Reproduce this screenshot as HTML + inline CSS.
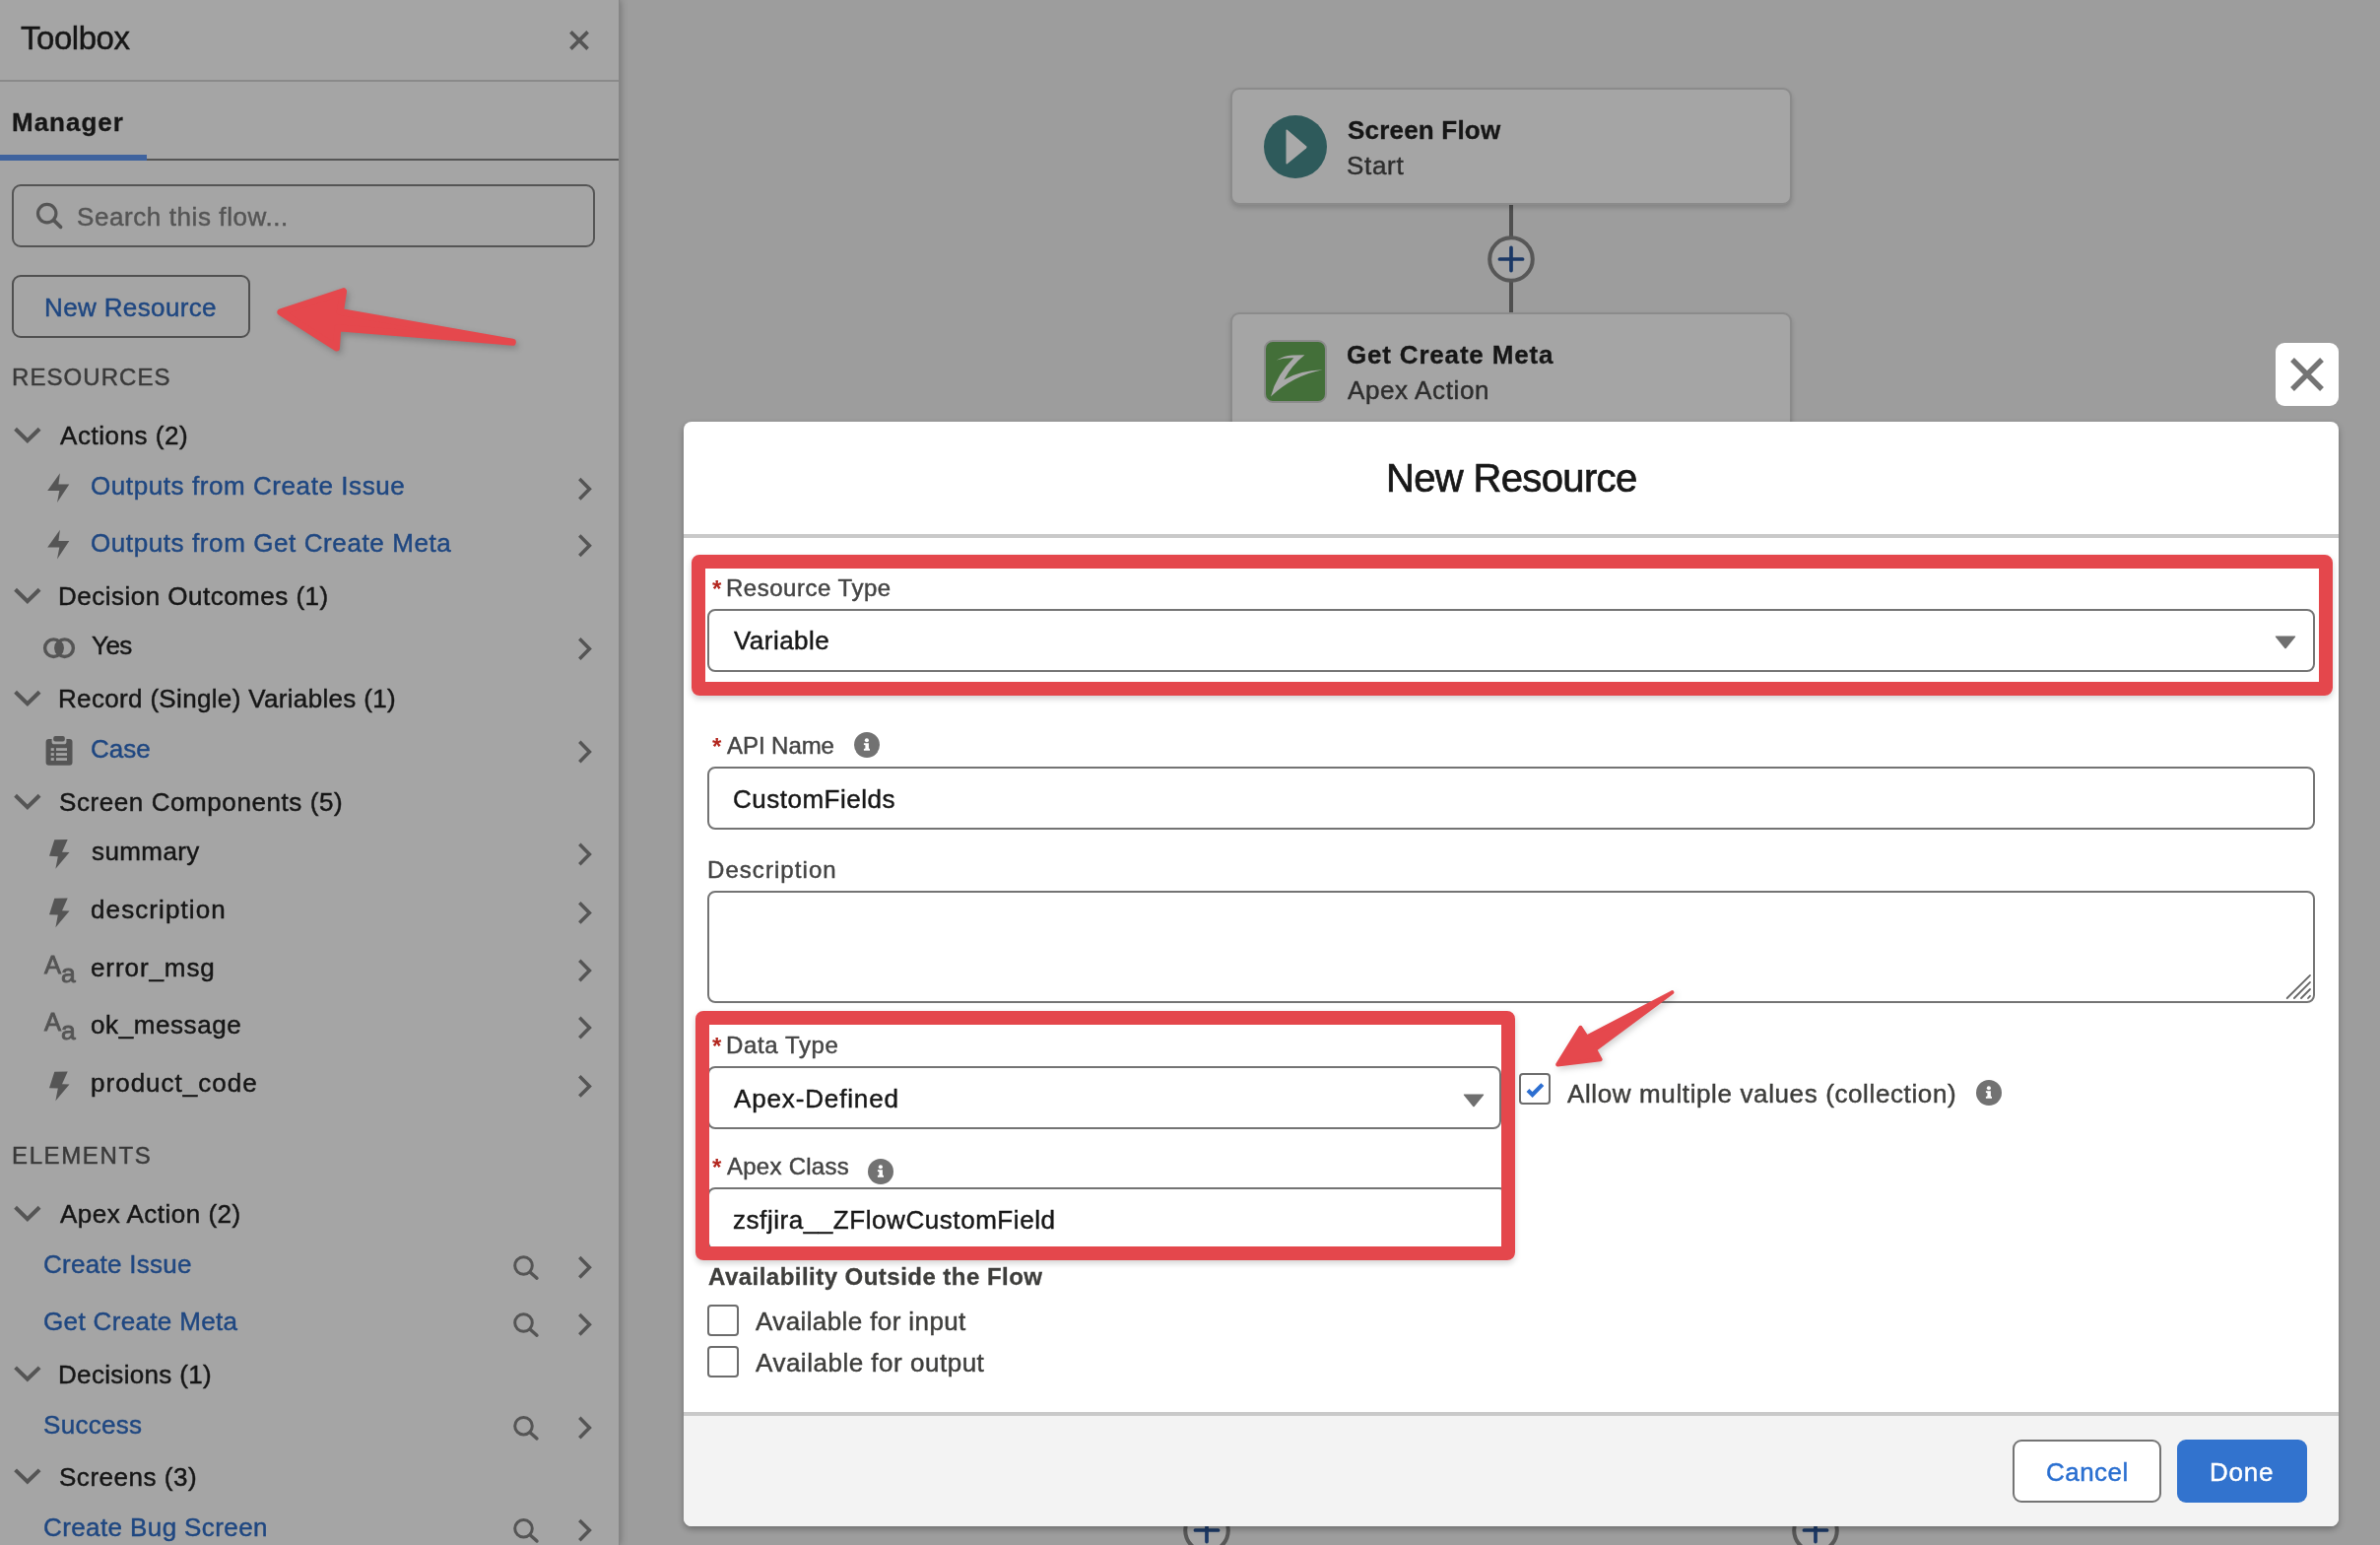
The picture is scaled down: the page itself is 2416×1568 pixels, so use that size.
<!DOCTYPE html>
<html lang="en">
<head>
<meta charset="utf-8">
<title>Flow Builder - New Resource</title>
<style>
html,body{margin:0;padding:0;}
body{width:2416px;height:1568px;overflow:hidden;position:relative;background:#9d9d9d;font-family:"Liberation Sans",sans-serif;}
.a{position:absolute;box-sizing:border-box;}
.t{position:absolute;white-space:nowrap;line-height:1;margin:0;padding:0;-webkit-text-stroke:0.45px currentColor;will-change:transform;}
svg{position:absolute;overflow:visible;}
.inp{position:absolute;box-sizing:border-box;border:2px solid #747474;border-radius:8px;background:#fff;}
.cb{position:absolute;box-sizing:border-box;border:2px solid #6c6c6c;border-radius:4px;background:#fff;width:32px;height:32px;}
.card{position:absolute;box-sizing:border-box;background:#a5a5a5;border:2px solid #8b8b8b;border-radius:9px;box-shadow:0 3px 5px rgba(0,0,0,0.16);}
.ast{position:absolute;color:#b3261e;font-size:24px;line-height:1;font-weight:700;will-change:transform;}
</style>
</head>
<body>

<!-- ================= CANVAS ================= -->
<div id="canvas" class="a" style="left:0;top:0;width:2416px;height:1568px;">
  <!-- connector lines -->
  <div class="a" style="left:1532px;top:207px;width:4px;height:112px;background:#4f4f4f;"></div>
  <!-- start card -->
  <div class="card" style="left:1249px;top:89px;width:570px;height:119px;"></div>
  <svg style="left:1283px;top:117px;" width="64" height="64" viewBox="0 0 64 64">
    <circle cx="32" cy="32" r="32" fill="#2e5a5b"/>
    <path d="M22.5 15.5 L22.5 48.5 Q22.5 50 23.8 49.2 L43 33.5 Q44.2 32.3 43 31.2 L23.8 14.8 Q22.5 14 22.5 15.5 Z" fill="#a9a9a9"/>
  </svg>
  <!-- plus connector -->
  <svg style="left:1510px;top:239px;" width="48" height="48" viewBox="0 0 48 48">
    <circle cx="24" cy="24" r="21.8" fill="#a5a5a5" stroke="#575757" stroke-width="4"/>
    <path d="M12.4 24 H35.6 M24 12.4 V35.6" stroke="#1b3865" stroke-width="3.7" stroke-linecap="round" fill="none"/>
  </svg>
  <!-- get create meta card -->
  <div class="card" style="left:1249px;top:317px;width:570px;height:140px;"></div>
  <svg style="left:1283px;top:345px;" width="64" height="64" viewBox="0 0 64 64">
    <rect x="1" y="1" width="62" height="62" rx="8" ry="8" fill="#436f39" stroke="#8b8b8b" stroke-width="2"/>
    <path d="M12.8 20.6 Q20 16 28.8 15.4 L41.4 15.3 Q28 26 20.4 40.5 Q36 31 59.7 30.3 Q30 36 7 57.4 Q13 35 30.3 18.3 Q20 18 12.8 20.6 Z" fill="#a9a9a9"/>
  </svg>
  <!-- bottom plus connectors (mostly hidden under modal) -->
  <svg style="left:1201px;top:1529px;" width="48" height="48" viewBox="0 0 48 48">
    <circle cx="24" cy="24" r="21.8" fill="#a5a5a5" stroke="#575757" stroke-width="4"/>
    <path d="M12.4 24 H35.6 M24 12.4 V35.6" stroke="#1b3865" stroke-width="3.7" stroke-linecap="round" fill="none"/>
  </svg>
  <svg style="left:1819px;top:1529px;" width="48" height="48" viewBox="0 0 48 48">
    <circle cx="24" cy="24" r="21.8" fill="#a5a5a5" stroke="#575757" stroke-width="4"/>
    <path d="M12.4 24 H35.6 M24 12.4 V35.6" stroke="#1b3865" stroke-width="3.7" stroke-linecap="round" fill="none"/>
  </svg>
</div>

<!-- ================= SIDEBAR ================= -->
<div id="sidebar" class="a" style="left:0;top:0;width:628px;height:1568px;background:#a5a5a5;box-shadow:1px 0 0 #868686, 2px 0 7px rgba(0,0,0,0.28);"></div>
<div class="a" style="left:0;top:81px;width:628px;height:2px;background:#8a8a8a;"></div>
<div class="a" style="left:0;top:161px;width:628px;height:2px;background:#555555;"></div>
<div class="a" style="left:0;top:157px;width:149px;height:6px;background:#3f639e;"></div>
<!-- toolbox close X -->
<svg style="left:578px;top:31px;" width="20" height="20" viewBox="0 0 20 20"><path d="M1.4 1.4 L18.6 18.6 M18.6 1.4 L1.4 18.6" stroke="#555" stroke-width="3.7" fill="none"/></svg>
<!-- search box -->
<div class="a" style="left:12px;top:187px;width:592px;height:64px;border:2px solid #555;border-radius:9px;"></div>
<svg style="left:36px;top:205px;" width="28" height="28" viewBox="0 0 28 28"><circle cx="11.7" cy="11.6" r="9.2" stroke="#555" stroke-width="3.2" fill="none"/><path d="M18.4 18.4 L25.6 25.4" stroke="#555" stroke-width="3.6" stroke-linecap="round"/></svg>
<!-- new resource button -->
<div class="a" style="left:12px;top:279px;width:242px;height:64px;border:2px solid #505050;border-radius:9px;"></div>
<!-- red arrow 1 -->
<svg style="left:0;top:0;filter:drop-shadow(2px 3px 3px rgba(0,0,0,0.22));" width="640" height="400" viewBox="0 0 640 400">
  <path d="M284.9 316.7 L348.6 295.7 L345.4 316.4 L520.3 347.3 L342.8 332.8 L341.5 352.9 Z" fill="#e5484d" stroke="#e5484d" stroke-width="7" stroke-linejoin="round"/>
</svg>

<svg style="left:0;top:0" width="60" height="1568"><path d="M15.6 435.3 L27.85 447.2 L40.1 435.3" stroke="#555555" stroke-width="4" fill="none" stroke-linejoin="miter"/></svg>
<svg style="left:0;top:0" width="60" height="1568"><path d="M15.6 598.3 L27.85 610.2 L40.1 598.3" stroke="#555555" stroke-width="4" fill="none" stroke-linejoin="miter"/></svg>
<svg style="left:0;top:0" width="60" height="1568"><path d="M15.6 702.3 L27.85 714.2 L40.1 702.3" stroke="#555555" stroke-width="4" fill="none" stroke-linejoin="miter"/></svg>
<svg style="left:0;top:0" width="60" height="1568"><path d="M15.6 807.3 L27.85 819.2 L40.1 807.3" stroke="#555555" stroke-width="4" fill="none" stroke-linejoin="miter"/></svg>
<svg style="left:0;top:0" width="60" height="1568"><path d="M15.6 1225.3 L27.85 1237.2 L40.1 1225.3" stroke="#555555" stroke-width="4" fill="none" stroke-linejoin="miter"/></svg>
<svg style="left:0;top:0" width="60" height="1568"><path d="M15.6 1387.9 L27.85 1399.8 L40.1 1387.9" stroke="#555555" stroke-width="4" fill="none" stroke-linejoin="miter"/></svg>
<svg style="left:0;top:0" width="60" height="1568"><path d="M15.6 1491.9 L27.85 1503.8 L40.1 1491.9" stroke="#555555" stroke-width="4" fill="none" stroke-linejoin="miter"/></svg>
<svg style="left:0;top:0" width="628" height="1568"><path d="M588.3 486.0 L598.4 496.2 L588.3 506.4" stroke="#555555" stroke-width="3.5" fill="none" stroke-linejoin="miter"/></svg>
<svg style="left:0;top:0" width="100" height="1568"><polygon points="60.9,480.3 48.2,497.9 60.3,497.9 58.0,509.9 70.3,491.6 59.4,491.6" fill="#555555"/></svg>
<svg style="left:0;top:0" width="628" height="1568"><path d="M588.3 543.5 L598.4 553.7 L588.3 563.9" stroke="#555555" stroke-width="3.5" fill="none" stroke-linejoin="miter"/></svg>
<svg style="left:0;top:0" width="100" height="1568"><polygon points="60.9,537.8 48.2,555.4 60.3,555.4 58.0,567.4 70.3,549.1 59.4,549.1" fill="#555555"/></svg>
<svg style="left:0;top:0" width="628" height="1568"><path d="M588.3 648.3 L598.4 658.5 L588.3 668.7" stroke="#555555" stroke-width="3.5" fill="none" stroke-linejoin="miter"/></svg>
<svg style="left:0;top:0" width="100" height="1568"><circle cx="54.4" cy="657.7" r="8.8" stroke="#555555" stroke-width="3.4" fill="none"/><circle cx="65.6" cy="657.7" r="8.8" stroke="#555555" stroke-width="3.4" fill="none"/><path d="M60 650.1 A8.8 8.8 0 0 1 60 665.3 A8.8 8.8 0 0 1 60 650.1 Z" fill="#555555"/></svg>
<svg style="left:0;top:0" width="628" height="1568"><path d="M588.3 752.8 L598.4 763.0 L588.3 773.2" stroke="#555555" stroke-width="3.5" fill="none" stroke-linejoin="miter"/></svg>
<svg style="left:0;top:0" width="100" height="1568"><rect x="46.6" y="750.0" width="26.9" height="26.8" rx="3" fill="#555555"/><rect x="52.6" y="746.7" width="14.8" height="8.6" rx="2.6" fill="#a5a5a5"/><rect x="54.2" y="747.0" width="11.6" height="5.4" rx="2" fill="#555555"/><rect x="51.7" y="759.2" width="3.1" height="2.7" fill="#a5a5a5"/><rect x="57" y="759.2" width="11" height="2.7" fill="#a5a5a5"/><rect x="51.7" y="764.2" width="3.1" height="2.7" fill="#a5a5a5"/><rect x="57" y="764.2" width="11" height="2.7" fill="#a5a5a5"/><rect x="51.7" y="769.2" width="3.1" height="2.7" fill="#a5a5a5"/><rect x="57" y="769.2" width="11" height="2.7" fill="#a5a5a5"/></svg>
<svg style="left:0;top:0" width="628" height="1568"><path d="M588.3 856.8 L598.4 867.0 L588.3 877.2" stroke="#555555" stroke-width="3.5" fill="none" stroke-linejoin="miter"/></svg>
<svg style="left:0;top:0" width="100" height="1568"><polygon points="55.3,852.3 68.7,852.1 63.0,864.8 70.5,865.1 56.4,881.8 58.8,869.2 50.0,868.8" fill="#555555"/></svg>
<svg style="left:0;top:0" width="628" height="1568"><path d="M588.3 916.2 L598.4 926.4 L588.3 936.6" stroke="#555555" stroke-width="3.5" fill="none" stroke-linejoin="miter"/></svg>
<svg style="left:0;top:0" width="100" height="1568"><polygon points="55.3,911.7 68.7,911.5 63.0,924.2 70.5,924.5 56.4,941.2 58.8,928.6 50.0,928.2" fill="#555555"/></svg>
<svg style="left:0;top:0" width="628" height="1568"><path d="M588.3 974.8 L598.4 985.0 L588.3 995.2" stroke="#555555" stroke-width="3.5" fill="none" stroke-linejoin="miter"/></svg>
<div class="t" style="left:44.8px;top:966.8px;font-size:25.5px;color:#555555;-webkit-text-stroke:0.9px #555555">A</div><div class="t" style="left:61.6px;top:974.9px;font-size:26.5px;color:#555555;-webkit-text-stroke:0.9px #555555">a</div>
<svg style="left:0;top:0" width="628" height="1568"><path d="M588.3 1032.8 L598.4 1043.0 L588.3 1053.2" stroke="#555555" stroke-width="3.5" fill="none" stroke-linejoin="miter"/></svg>
<div class="t" style="left:44.8px;top:1024.8px;font-size:25.5px;color:#555555;-webkit-text-stroke:0.9px #555555">A</div><div class="t" style="left:61.6px;top:1032.9px;font-size:26.5px;color:#555555;-webkit-text-stroke:0.9px #555555">a</div>
<svg style="left:0;top:0" width="628" height="1568"><path d="M588.3 1092.2 L598.4 1102.4 L588.3 1112.6" stroke="#555555" stroke-width="3.5" fill="none" stroke-linejoin="miter"/></svg>
<svg style="left:0;top:0" width="100" height="1568"><polygon points="55.3,1087.7 68.7,1087.5 63.0,1100.2 70.5,1100.5 56.4,1117.2 58.8,1104.6 50.0,1104.2" fill="#555555"/></svg>
<svg style="left:0;top:0" width="628" height="1568"><path d="M588.3 1276.1 L598.4 1286.3 L588.3 1296.5" stroke="#555555" stroke-width="3.5" fill="none" stroke-linejoin="miter"/></svg>
<svg style="left:0;top:0" width="628" height="1568"><circle cx="531.5" cy="1284.5" r="8.8" stroke="#555555" stroke-width="3" fill="none"/><path d="M538 1291.0 L545 1297.2" stroke="#555555" stroke-width="3.4" stroke-linecap="round"/></svg>
<svg style="left:0;top:0" width="628" height="1568"><path d="M588.3 1334.1 L598.4 1344.3 L588.3 1354.5" stroke="#555555" stroke-width="3.5" fill="none" stroke-linejoin="miter"/></svg>
<svg style="left:0;top:0" width="628" height="1568"><circle cx="531.5" cy="1342.5" r="8.8" stroke="#555555" stroke-width="3" fill="none"/><path d="M538 1349.0 L545 1355.2" stroke="#555555" stroke-width="3.4" stroke-linecap="round"/></svg>
<svg style="left:0;top:0" width="628" height="1568"><path d="M588.3 1438.8 L598.4 1449.0 L588.3 1459.2" stroke="#555555" stroke-width="3.5" fill="none" stroke-linejoin="miter"/></svg>
<svg style="left:0;top:0" width="628" height="1568"><circle cx="531.5" cy="1447.2" r="8.8" stroke="#555555" stroke-width="3" fill="none"/><path d="M538 1453.7 L545 1459.9" stroke="#555555" stroke-width="3.4" stroke-linecap="round"/></svg>
<svg style="left:0;top:0" width="628" height="1568"><path d="M588.3 1542.9 L598.4 1553.1 L588.3 1563.3" stroke="#555555" stroke-width="3.5" fill="none" stroke-linejoin="miter"/></svg>
<svg style="left:0;top:0" width="628" height="1568"><circle cx="531.5" cy="1551.3" r="8.8" stroke="#555555" stroke-width="3" fill="none"/><path d="M538 1557.8 L545 1564.0" stroke="#555555" stroke-width="3.4" stroke-linecap="round"/></svg>

<div class="t" style="left:21.00px;top:21.77px;font-size:33px;font-weight:400;color:#161616;letter-spacing:-0.457px">Toolbox</div>
<div class="t" style="left:12.40px;top:110.99px;font-size:26px;font-weight:700;color:#161616;letter-spacing:1.000px;-webkit-text-stroke:0.3px">Manager</div>
<div class="t" style="left:78.30px;top:206.99px;font-size:26px;font-weight:400;color:#555555;letter-spacing:0.587px">Search this flow...</div>
<div class="t" style="left:45.30px;top:298.89px;font-size:26px;font-weight:400;color:#1f4781;letter-spacing:0.368px">New Resource</div>
<div class="t" style="left:12.00px;top:370.68px;font-size:24px;font-weight:400;color:#3a3a3a;letter-spacing:1.060px">RESOURCES</div>
<div class="t" style="left:61.00px;top:428.99px;font-size:26px;font-weight:400;color:#161616;letter-spacing:0.540px">Actions (2)</div>
<div class="t" style="left:91.70px;top:480.19px;font-size:26px;font-weight:400;color:#1f4781;letter-spacing:0.577px">Outputs from Create Issue</div>
<div class="t" style="left:91.70px;top:537.69px;font-size:26px;font-weight:400;color:#1f4781;letter-spacing:0.595px">Outputs from Get Create Meta</div>
<div class="t" style="left:59.00px;top:591.99px;font-size:26px;font-weight:400;color:#161616;letter-spacing:0.487px">Decision Outcomes (1)</div>
<div class="t" style="left:92.70px;top:642.49px;font-size:26px;font-weight:400;color:#161616;letter-spacing:-0.558px">Yes</div>
<div class="t" style="left:59.00px;top:695.99px;font-size:26px;font-weight:400;color:#161616;letter-spacing:0.334px">Record (Single) Variables (1)</div>
<div class="t" style="left:91.70px;top:746.99px;font-size:26px;font-weight:400;color:#1f4781;letter-spacing:0.021px">Case</div>
<div class="t" style="left:60.00px;top:800.99px;font-size:26px;font-weight:400;color:#161616;letter-spacing:0.582px">Screen Components (5)</div>
<div class="t" style="left:92.70px;top:850.99px;font-size:26px;font-weight:400;color:#161616;letter-spacing:0.401px">summary</div>
<div class="t" style="left:91.70px;top:910.39px;font-size:26px;font-weight:400;color:#161616;letter-spacing:1.103px">description</div>
<div class="t" style="left:91.70px;top:968.99px;font-size:26px;font-weight:400;color:#161616;letter-spacing:0.911px">error_msg</div>
<div class="t" style="left:91.70px;top:1026.99px;font-size:26px;font-weight:400;color:#161616;letter-spacing:0.594px">ok_message</div>
<div class="t" style="left:91.70px;top:1086.39px;font-size:26px;font-weight:400;color:#161616;letter-spacing:1.018px">product_code</div>
<div class="t" style="left:12.00px;top:1160.68px;font-size:24px;font-weight:400;color:#3a3a3a;letter-spacing:1.621px">ELEMENTS</div>
<div class="t" style="left:61.00px;top:1218.99px;font-size:26px;font-weight:400;color:#161616;letter-spacing:0.494px">Apex Action (2)</div>
<div class="t" style="left:44.00px;top:1270.29px;font-size:26px;font-weight:400;color:#1f4781;letter-spacing:0.278px">Create Issue</div>
<div class="t" style="left:44.00px;top:1328.29px;font-size:26px;font-weight:400;color:#1f4781;letter-spacing:0.348px">Get Create Meta</div>
<div class="t" style="left:59.00px;top:1381.59px;font-size:26px;font-weight:400;color:#161616;letter-spacing:0.329px">Decisions (1)</div>
<div class="t" style="left:44.00px;top:1432.99px;font-size:26px;font-weight:400;color:#1f4781;letter-spacing:0.290px">Success</div>
<div class="t" style="left:60.00px;top:1485.59px;font-size:26px;font-weight:400;color:#161616;letter-spacing:0.528px">Screens (3)</div>
<div class="t" style="left:44.00px;top:1537.09px;font-size:26px;font-weight:400;color:#1f4781;letter-spacing:0.396px">Create Bug Screen</div>
<div class="t" style="left:1367.60px;top:118.89px;font-size:26px;font-weight:700;color:#161616;letter-spacing:0.197px;-webkit-text-stroke:0.3px">Screen Flow</div>
<div class="t" style="left:1366.60px;top:154.99px;font-size:26px;font-weight:400;color:#2e2e2e;letter-spacing:0.679px">Start</div>
<div class="t" style="left:1366.60px;top:347.39px;font-size:26px;font-weight:700;color:#161616;letter-spacing:0.814px;-webkit-text-stroke:0.3px">Get Create Meta</div>
<div class="t" style="left:1367.60px;top:382.99px;font-size:26px;font-weight:400;color:#2e2e2e;letter-spacing:0.611px">Apex Action</div>

<!-- ================= MODAL ================= -->
<!-- close button -->
<div class="a" style="left:2310px;top:348px;width:64px;height:64px;background:#fff;border-radius:9px;"></div>
<svg style="left:2325px;top:363px;" width="34" height="34" viewBox="0 0 34 34"><path d="M2 2 L32 32 M32 2 L2 32" stroke="#747474" stroke-width="5.4" fill="none"/></svg>

<div id="modal" class="a" style="left:694px;top:428px;width:1680px;height:1121px;background:#fff;border-radius:8px;box-shadow:0 3px 6px rgba(0,0,0,0.3);overflow:hidden;">
  <div class="a" style="left:0;top:114px;width:1680px;height:4px;background:#c9c9c9;"></div>
  <div class="a" style="left:0;top:1005px;width:1680px;height:4px;background:#c9c9c9;"></div>
  <div class="a" style="left:0;top:1009px;width:1680px;height:112px;background:#f3f3f3;"></div>
</div>

<!-- inputs -->
<div class="inp" style="left:718px;top:618px;width:1632px;height:64px;"></div>
<svg style="left:2309px;top:645px;" width="22" height="14" viewBox="0 0 22 14"><path d="M1.2 0.6 H20.8 Q21.6 0.8 21 1.6 L11.7 12.9 Q11 13.6 10.3 12.9 L1 1.6 Q0.4 0.8 1.2 0.6 Z" fill="#6f6f6f"/></svg>
<div class="inp" style="left:718px;top:778px;width:1632px;height:64px;"></div>
<div class="inp" style="left:718px;top:904px;width:1632px;height:114px;"></div>
<!-- textarea resize grip -->
<svg style="left:2320px;top:988px;" width="26" height="26" viewBox="0 0 26 26"><path d="M1.7 25 L25 1.9 M8.9 25 L25 8.9 M16 25 L25 16 M23 25 L25 22.8" stroke="#666" stroke-width="1.8" stroke-linecap="round" fill="none"/></svg>
<div class="inp" style="left:718px;top:1082px;width:806px;height:64px;"></div>
<svg style="left:1485px;top:1110px;" width="22" height="14" viewBox="0 0 22 14"><path d="M1.2 0.6 H20.8 Q21.6 0.8 21 1.6 L11.7 12.9 Q11 13.6 10.3 12.9 L1 1.6 Q0.4 0.8 1.2 0.6 Z" fill="#6f6f6f"/></svg>
<div class="inp" style="left:718px;top:1205px;width:812px;height:64px;"></div>

<!-- required asterisks -->
<div class="ast" style="left:723px;top:586px;">*</div>
<div class="ast" style="left:723px;top:746px;">*</div>
<div class="ast" style="left:723px;top:1050px;">*</div>
<div class="ast" style="left:723px;top:1173px;">*</div>

<!-- info icons -->
<svg style="left:867px;top:743px;" width="26" height="26" viewBox="0 0 26 26"><circle cx="13" cy="13" r="13" fill="#727272"/><circle cx="12.9" cy="8.2" r="2.05" fill="#fff"/><path d="M9.9 11.3 H14.9 V16.4 L16 17 V18.8 H9.9 V17 L11.4 16.4 V13.2 L9.9 12.9 Z" fill="#fff"/></svg>
<svg style="left:881px;top:1176px;" width="26" height="26" viewBox="0 0 26 26"><circle cx="13" cy="13" r="13" fill="#727272"/><circle cx="12.9" cy="8.2" r="2.05" fill="#fff"/><path d="M9.9 11.3 H14.9 V16.4 L16 17 V18.8 H9.9 V17 L11.4 16.4 V13.2 L9.9 12.9 Z" fill="#fff"/></svg>
<svg style="left:2006px;top:1096px;" width="26" height="26" viewBox="0 0 26 26"><circle cx="13" cy="13" r="13" fill="#727272"/><circle cx="12.9" cy="8.2" r="2.05" fill="#fff"/><path d="M9.9 11.3 H14.9 V16.4 L16 17 V18.8 H9.9 V17 L11.4 16.4 V13.2 L9.9 12.9 Z" fill="#fff"/></svg>

<!-- checkboxes -->
<div class="cb" style="left:1542px;top:1089px;"></div>
<svg style="left:1548px;top:1098px;" width="20" height="17" viewBox="0 0 20 17"><path d="M3 8.6 L7.6 13 L17.8 2.6" stroke="#2d6fd1" stroke-width="4.2" fill="none" stroke-linecap="butt" stroke-linejoin="miter"/></svg>
<div class="cb" style="left:718px;top:1324px;"></div>
<div class="cb" style="left:718px;top:1366px;"></div>

<!-- footer buttons -->
<div class="a" style="left:2043px;top:1461px;width:151px;height:64px;background:#fff;border:2px solid #747474;border-radius:9px;"></div>
<div class="a" style="left:2210px;top:1461px;width:132px;height:64px;background:#3273ce;border-radius:9px;"></div>

<!-- red highlight rectangles -->
<div class="a" style="left:702px;top:563px;width:1666px;height:143px;border:14px solid #e4474c;border-radius:8px;box-shadow:0 3px 6px rgba(0,0,0,0.18);"></div>
<div class="a" style="left:706px;top:1026px;width:832px;height:253px;border:14px solid #e4474c;border-radius:8px;box-shadow:0 3px 6px rgba(0,0,0,0.18);"></div>
<!-- red arrow 2 -->
<svg style="left:1500px;top:960px;filter:drop-shadow(2px 3px 3px rgba(0,0,0,0.18));" width="300" height="160" viewBox="1500 960 300 160">
  <path d="M1581.2 1080.4 L1604.4 1042.8 L1610.6 1052.4 L1697.4 1007.2 L1619.2 1065.2 L1624.6 1075.2 Z" fill="#e5484d" stroke="#e5484d" stroke-width="4" stroke-linejoin="round"/>
</svg>

<div class="t" style="left:1406.80px;top:465.34px;font-size:40px;font-weight:400;color:#181818;letter-spacing:-0.653px;-webkit-text-stroke:0.7px">New Resource</div>
<div class="t" style="left:736.80px;top:584.58px;font-size:24px;font-weight:400;color:#444444;letter-spacing:0.511px">Resource Type</div>
<div class="t" style="left:744.50px;top:637.19px;font-size:26px;font-weight:400;color:#181818;letter-spacing:0.457px">Variable</div>
<div class="t" style="left:737.80px;top:744.68px;font-size:24px;font-weight:400;color:#444444;letter-spacing:-0.060px">API Name</div>
<div class="t" style="left:743.50px;top:797.79px;font-size:26px;font-weight:400;color:#181818;letter-spacing:0.506px">CustomFields</div>
<div class="t" style="left:717.70px;top:870.68px;font-size:24px;font-weight:400;color:#444444;letter-spacing:1.060px">Description</div>
<div class="t" style="left:736.80px;top:1048.68px;font-size:24px;font-weight:400;color:#444444;letter-spacing:0.619px">Data Type</div>
<div class="t" style="left:744.50px;top:1101.99px;font-size:26px;font-weight:400;color:#181818;letter-spacing:0.857px">Apex-Defined</div>
<div class="t" style="left:737.80px;top:1171.68px;font-size:24px;font-weight:400;color:#444444;letter-spacing:0.257px">Apex Class</div>
<div class="t" style="left:743.50px;top:1224.69px;font-size:26px;font-weight:400;color:#181818;letter-spacing:0.560px">zsfjira__ZFlowCustomField</div>
<div class="t" style="left:1591.00px;top:1096.79px;font-size:26px;font-weight:400;color:#3e3e3c;letter-spacing:0.618px">Allow multiple values (collection)</div>
<div class="t" style="left:718.70px;top:1284.08px;font-size:24px;font-weight:700;color:#3e3e3c;letter-spacing:0.469px;-webkit-text-stroke:0.3px">Availability Outside the Flow</div>
<div class="t" style="left:767.40px;top:1327.99px;font-size:26px;font-weight:400;color:#3e3e3c;letter-spacing:0.395px">Available for input</div>
<div class="t" style="left:767.40px;top:1369.79px;font-size:26px;font-weight:400;color:#3e3e3c;letter-spacing:0.511px">Available for output</div>
<div class="t" style="left:2077.00px;top:1480.99px;font-size:26px;font-weight:400;color:#2a6fd0;letter-spacing:0.469px">Cancel</div>
<div class="t" style="left:2243.00px;top:1480.99px;font-size:26px;font-weight:400;color:#ffffff;letter-spacing:0.768px">Done</div>

</body>
</html>
